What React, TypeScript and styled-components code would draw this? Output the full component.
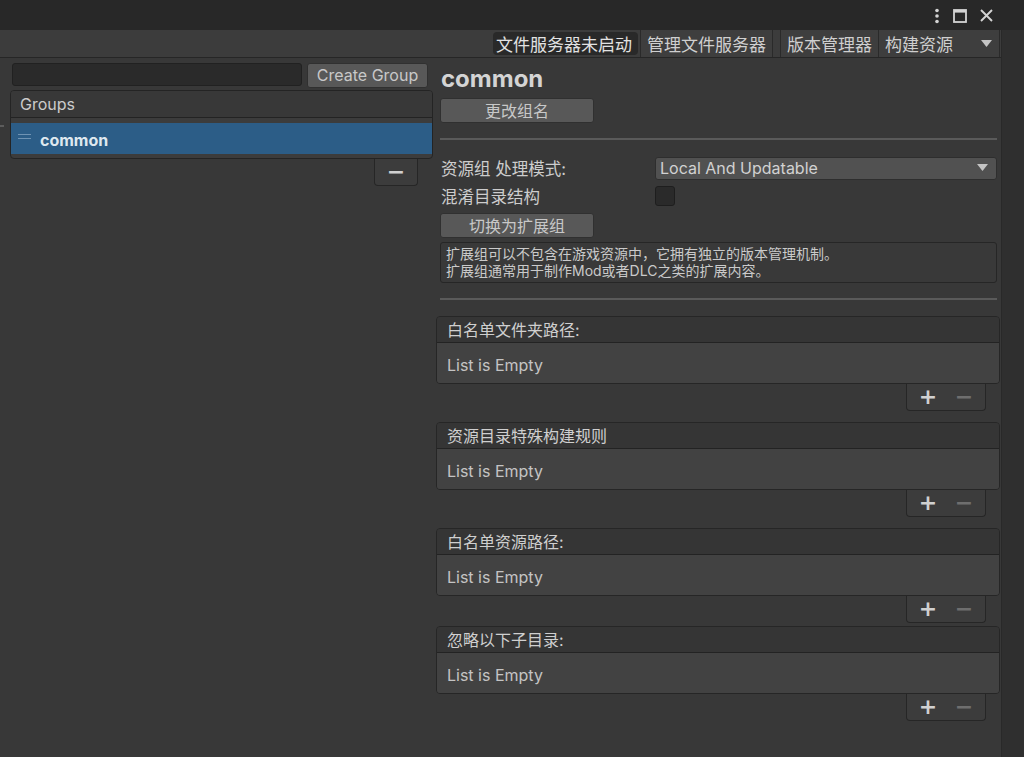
import React from 'react';
import styled, { createGlobalStyle } from 'styled-components';

const GlobalStyle = createGlobalStyle`
  html, body {
    margin: 0;
    padding: 0;
    background: #383838;
  }
  body {
    font-family: Inter, "Noto Sans CJK SC", "Noto Sans", sans-serif;
    color: #d2d2d2;
  }
  * {
    box-sizing: border-box;
  }
`;

const lists = [
  { title: '白名单文件夹路径:', gap: 11 },
  { title: '资源目录特殊构建规则', gap: 11 },
  { title: '白名单资源路径:', gap: 3 },
  { title: '忽略以下子目录:', gap: 0 },
];

const Caret = () => (
  <svg width="11" height="7" viewBox="0 0 11 7">
    <path d="M0 0 L11 0 L5.5 7 Z" fill="#c4c4c4" />
  </svg>
);

const App = () => {
  return (
    <Window>
      <GlobalStyle />
      <TitleBar>
        <TitleIcons>
          <svg width="6" height="16" viewBox="0 0 6 16">
            <circle cx="3" cy="2.5" r="1.8" fill="#d4d4d4" />
            <circle cx="3" cy="8" r="1.8" fill="#d4d4d4" />
            <circle cx="3" cy="13.5" r="1.8" fill="#d4d4d4" />
          </svg>
          <svg width="14" height="14" viewBox="0 0 14 14">
            <rect x="1" y="1" width="12" height="12" fill="none" stroke="#d4d4d4" strokeWidth="1.8" />
            <rect x="1" y="1" width="12" height="2.6" fill="#d4d4d4" />
          </svg>
          <svg width="13" height="13" viewBox="0 0 13 13">
            <path d="M1 1 L12 12 M12 1 L1 12" stroke="#d4d4d4" strokeWidth="1.9" />
          </svg>
        </TitleIcons>
      </TitleBar>
      <Body>
        <MainColumn>
          <Toolbar>
            <StatusLabel>文件服务器未启动</StatusLabel>
            <ToolButton>管理文件服务器</ToolButton>
            <ToolSpacer />
            <ToolButton>版本管理器</ToolButton>
            <ToolButton $wide>
              构建资源
              <Caret />
            </ToolButton>
          </Toolbar>
          <Content>
            <LeftPanel>
              <EdgeMark />
              <CreateRow>
                <TextInput />
                <GreyButton $width={121}>Create Group</GreyButton>
              </CreateRow>
              <GroupsBox>
                <BoxHeader>Groups</BoxHeader>
                <GroupItems>
                  <SelectedRow>
                    <Handle />
                    common
                  </SelectedRow>
                </GroupItems>
              </GroupsBox>
              <GroupFooter>
                <FooterGlyph>−</FooterGlyph>
              </GroupFooter>
            </LeftPanel>
            <RightPanel>
              <GroupTitle>common</GroupTitle>
              <GreyButton $width={154}>更改组名</GreyButton>
              <Separator $top={15} />
              <FieldRow $top={16}>
                <FieldLabel>资源组 处理模式:</FieldLabel>
                <Dropdown>
                  Local And Updatable
                  <Caret />
                </Dropdown>
              </FieldRow>
              <FieldRow $top={4}>
                <FieldLabel>混淆目录结构</FieldLabel>
                <Checkbox />
              </FieldRow>
              <GreyButton $width={154} $top={5}>切换为扩展组</GreyButton>
              <HelpBox>
                扩展组可以不包含在游戏资源中，它拥有独立的版本管理机制。
                <br />
                扩展组通常用于制作Mod或者DLC之类的扩展内容。
              </HelpBox>
              <Separator $top={15} />
              <Lists>
                {lists.map((l) => (
                  <ListBlock key={l.title} $gap={l.gap}>
                    <ListFrame>
                      <ListHeader>{l.title}</ListHeader>
                      <ListBody>List is Empty</ListBody>
                    </ListFrame>
                    <ListFooter>
                      <FooterGlyph>+</FooterGlyph>
                      <FooterGlyph $dim>−</FooterGlyph>
                    </ListFooter>
                  </ListBlock>
                ))}
              </Lists>
            </RightPanel>
          </Content>
        </MainColumn>
        <ScrollStrip />
      </Body>
    </Window>
  );
};

export default App;

const Window = styled.div`
  width: 1024px;
  height: 757px;
  display: flex;
  flex-direction: column;
  overflow: hidden;
  background: #383838;
`;

const TitleBar = styled.div`
  height: 30px;
  background: #282828;
  display: flex;
  justify-content: flex-end;
  align-items: center;
  padding-right: 31px;
`;

const TitleIcons = styled.div`
  display: flex;
  align-items: center;
  gap: 13px;
  margin-top: 1px;
`;

const Body = styled.div`
  flex: 1;
  display: flex;
  min-height: 0;
`;

const MainColumn = styled.div`
  width: 1001px;
  display: flex;
  flex-direction: column;
`;

const ScrollStrip = styled.div`
  flex: 1;
  background: #2f2f2f;
  border-left: 1px solid #292929;
`;

const Toolbar = styled.div`
  height: 28px;
  background: #3c3c3c;
  border-bottom: 1px solid #262626;
  display: flex;
  justify-content: flex-end;
  align-items: stretch;
  padding-right: 1px;
  font-size: 17px;
  color: #d6d6d6;
`;

const StatusLabel = styled.div`
  display: flex;
  align-items: center;
  padding: 0 6px 1px 3px;
  margin: 2px 3px 2px 0;
  background: #292929;
  border-radius: 4px;
  color: #e2e2e2;
`;

const ToolButton = styled.div<{ $wide?: boolean }>`
  display: flex;
  align-items: center;
  justify-content: space-between;
  gap: 8px;
  padding: 0 ${({ $wide }) => ($wide ? '7px' : '6px')} 1px 6px;
  width: ${({ $wide }) => ($wide ? '122px' : 'auto')};
  border-left: 1px solid #2a2a2a;
  border-right: 1px solid #2a2a2a;
  margin-left: -1px;
  background: #3e3e3e;
  color: #cfcfcf;
`;

const ToolSpacer = styled.div`
  width: 8px;
  border-right: 1px solid #2a2a2a;
`;

const Content = styled.div`
  flex: 1;
  display: flex;
`;

const LeftPanel = styled.div`
  position: relative;
  width: 436px;
  display: flex;
  flex-direction: column;
  padding: 5px 0 0 10px;
`;

const EdgeMark = styled.div`
  position: absolute;
  left: 0;
  top: 67px;
  width: 4px;
  height: 2px;
  background: #5c5c5c;
`;

const CreateRow = styled.div`
  display: flex;
  align-items: flex-start;
  gap: 5px;
  padding-left: 2px;
`;

const TextInput = styled.div`
  width: 290px;
  height: 23px;
  background: #2a2a2a;
  border: 1px solid #212121;
  border-radius: 3px;
`;

const GreyButton = styled.div<{ $width: number; $top?: number }>`
  width: ${({ $width }) => $width}px;
  height: 25px;
  margin-top: ${({ $top }) => $top ?? 0}px;
  background: #585858;
  border: 1px solid #303030;
  border-radius: 3px;
  display: flex;
  align-items: center;
  justify-content: center;
  font-size: 16px;
  color: #c8c8c8;
  padding-bottom: 1px;
`;

const GroupsBox = styled.div`
  width: 423px;
  margin-top: 2px;
  border: 1px solid #242424;
  border-radius: 4px;
  background: #3c3c3c;
  overflow: hidden;
`;

const BoxHeader = styled.div`
  height: 27px;
  background: #383838;
  border-bottom: 1px solid #232323;
  display: flex;
  align-items: center;
  padding: 0 0 1px 9px;
  font-size: 16px;
  color: #cbcbcb;
`;

const GroupItems = styled.div`
  padding: 5px 0 4px;
`;

const SelectedRow = styled.div`
  height: 31px;
  background: #2c5d87;
  display: flex;
  align-items: center;
  gap: 9px;
  padding: 3px 0 0 7px;
  font-size: 16px;
  font-weight: 700;
  color: #dfe8ef;
`;

const Handle = styled.div`
  width: 13px;
  height: 5px;
  margin-top: -8px;
  border-top: 1px solid #6f93b3;
  border-bottom: 1px solid #6f93b3;
`;

const GroupFooter = styled.div`
  align-self: flex-start;
  margin-left: 364px;
  width: 44px;
  height: 27px;
  background: #3c3c3c;
  border: 1px solid #262626;
  border-top: none;
  border-radius: 0 0 4px 4px;
  display: flex;
  align-items: center;
  justify-content: center;
`;

const FooterGlyph = styled.span<{ $dim?: boolean }>`
  font-family: "DejaVu Sans", sans-serif;
  font-size: 22px;
  font-weight: 700;
  line-height: 1;
  color: ${({ $dim }) => ($dim ? '#6e6e6e' : '#d0d0d0')};
  width: 22px;
  text-align: center;
`;

const RightPanel = styled.div`
  flex: 1;
  display: flex;
  flex-direction: column;
  padding: 5px 4px 0 4px;
`;

const GroupTitle = styled.div`
  font-size: 24px;
  font-weight: 700;
  line-height: 32px;
  color: #d4d4d4;
  padding-left: 1px;
  margin-bottom: 3px;
`;

const Separator = styled.div<{ $top: number }>`
  height: 2px;
  margin-top: ${({ $top }) => $top}px;
  background: #5a5a5a;
`;

const FieldRow = styled.div<{ $top: number }>`
  display: flex;
  align-items: center;
  margin-top: ${({ $top }) => $top}px;
  min-height: 22px;
`;

const FieldLabel = styled.div`
  width: 215px;
  padding-left: 1px;
  font-size: 16.5px;
  color: #cdcdcd;
`;

const Dropdown = styled.div`
  flex: 1;
  height: 23px;
  background: #515151;
  border: 1px solid #2e2e2e;
  border-radius: 3px;
  display: flex;
  align-items: center;
  justify-content: space-between;
  padding: 0 8px 1px 4px;
  font-size: 16px;
  color: #d2d2d2;
`;

const Checkbox = styled.div`
  width: 20px;
  height: 20px;
  background: #2a2a2a;
  border: 1px solid #1e1e1e;
  border-radius: 3px;
`;

const HelpBox = styled.div`
  margin-top: 4px;
  padding: 2px 5px 3px;
  background: #393939;
  border: 1px solid #262626;
  border-radius: 3px;
  font-size: 14px;
  line-height: 17px;
  color: #cacaca;
`;

const Lists = styled.div`
  display: flex;
  flex-direction: column;
  margin: 16px -3px 0 -4px;
`;

const ListBlock = styled.div<{ $gap: number }>`
  display: flex;
  flex-direction: column;
  margin-bottom: ${({ $gap }) => $gap}px;
`;

const ListFrame = styled.div`
  border: 1px solid #262626;
  border-radius: 4px;
  overflow: hidden;
`;

const ListHeader = styled.div`
  height: 26px;
  background: #353535;
  border-bottom: 1px solid #232323;
  display: flex;
  align-items: center;
  padding: 0 0 1px 10px;
  font-size: 16px;
  color: #cfcfcf;
`;

const ListBody = styled.div`
  height: 40px;
  background: #424242;
  display: flex;
  align-items: center;
  padding: 3px 0 0 10px;
  font-size: 16px;
  color: #c4c4c4;
`;

const ListFooter = styled.div`
  align-self: flex-end;
  margin-right: 14px;
  width: 80px;
  height: 27px;
  background: #3c3c3c;
  border: 1px solid #262626;
  border-top: none;
  border-radius: 0 0 4px 4px;
  display: flex;
  align-items: center;
  justify-content: center;
  gap: 14px;
  padding-bottom: 1px;
`;
